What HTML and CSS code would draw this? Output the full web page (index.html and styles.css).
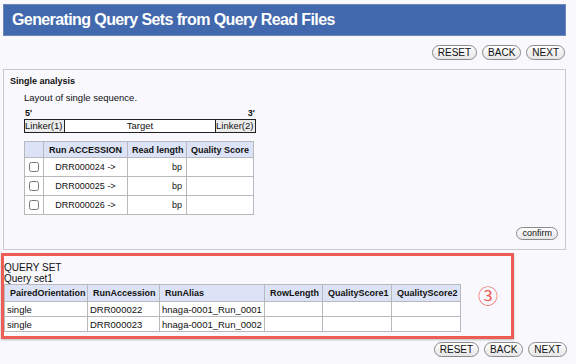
FILE: index.html
```html
<!DOCTYPE html>
<html lang="en">
<head>
    <meta charset="UTF-8">
    <title>Generating Query Sets from Query Read Files</title>
    <link rel="stylesheet" href="styles.css">
</head>
<body>
    <header class="title-bar">
        <h1>Generating Query Sets from Query Read Files</h1>
    </header>

    <div class="nav-buttons">
        <button class="pill">RESET</button>
        <button class="pill">BACK</button>
        <button class="pill">NEXT</button>
    </div>

    <section class="panel">
        <h2>Single analysis</h2>
        <div class="panel-body">
            <p class="layout-label">Layout of single sequence.</p>
            <div class="ends">
                <span>5'</span>
                <span>3'</span>
            </div>
            <div class="linker-bar">
                <div class="linker">Linker(1)</div>
                <div class="target">Target</div>
                <div class="linker">Linker(2)</div>
            </div>

            <table class="grid run-table">
                <colgroup>
                    <col class="w-check">
                    <col class="w-acc">
                    <col class="w-len">
                    <col class="w-qs">
                </colgroup>
                <thead>
                    <tr>
                        <th></th>
                        <th>Run ACCESSION</th>
                        <th>Read length</th>
                        <th>Quality Score</th>
                    </tr>
                </thead>
                <tbody>
                    <tr>
                        <td class="check"><input type="checkbox"></td>
                        <td class="acc">DRR000024 -&gt;</td>
                        <td class="bp">bp</td>
                        <td></td>
                    </tr>
                    <tr>
                        <td class="check"><input type="checkbox"></td>
                        <td class="acc">DRR000025 -&gt;</td>
                        <td class="bp">bp</td>
                        <td></td>
                    </tr>
                    <tr>
                        <td class="check"><input type="checkbox"></td>
                        <td class="acc">DRR000026 -&gt;</td>
                        <td class="bp">bp</td>
                        <td></td>
                    </tr>
                </tbody>
            </table>
        </div>
        <div class="confirm-row">
            <button class="pill">confirm</button>
        </div>
    </section>

    <section class="query-box">
        <div class="query-set">
            <p>QUERY SET</p>
            <p>Query set1</p>
            <table class="grid query-table">
                <colgroup>
                    <col class="w-orient">
                    <col class="w-acc">
                    <col class="w-alias">
                    <col class="w-row">
                    <col class="w-q">
                    <col class="w-q">
                </colgroup>
                <thead>
                    <tr>
                        <th>PairedOrientation</th>
                        <th>RunAccession</th>
                        <th>RunAlias</th>
                        <th>RowLength</th>
                        <th>QualityScore1</th>
                        <th>QualityScore2</th>
                    </tr>
                </thead>
                <tbody>
                    <tr>
                        <td>single</td>
                        <td>DRR000022</td>
                        <td>hnaga-0001_Run_0001</td>
                        <td></td>
                        <td></td>
                        <td></td>
                    </tr>
                    <tr>
                        <td>single</td>
                        <td>DRR000023</td>
                        <td>hnaga-0001_Run_0002</td>
                        <td></td>
                        <td></td>
                        <td></td>
                    </tr>
                </tbody>
            </table>
        </div>
        <span class="step-mark">③</span>
    </section>

    <div class="nav-buttons bottom">
        <button class="pill">RESET</button>
        <button class="pill">BACK</button>
        <button class="pill">NEXT</button>
    </div>
</body>
</html>
```

FILE: styles.css
```css
/* general */
body {
    margin: 0;
    padding: 4px 10px 0 3px;
    background-color: #f8f8fd;
    font-family: 'Liberation Sans', Arial, sans-serif;
    font-size: 9px;
    color: #111;
}

p {
    margin: 0;
}

.title-bar {
    height: 30px;
    background-color: #4268ad;
    border: 1px solid #6f86b8;
    display: flex;
    align-items: center;
}

.title-bar h1 {
    margin: 0 0 0 8px;
    font-size: 16px;
    letter-spacing: -0.6px;
    font-weight: bold;
    color: #fff;
}

.nav-buttons {
    display: flex;
    justify-content: flex-end;
    gap: 5px;
    margin-top: 9px;
    padding-right: 1px;
}

.nav-buttons.bottom {
    margin-top: 3px;
    margin-right: -2px;
}

.pill {
    font-family: 'Liberation Sans', Arial, sans-serif;
    font-size: 10px;
    height: 15px;
    padding: 0 5px;
    border: 1px solid #8a8a8a;
    border-radius: 8px;
    background: linear-gradient(#ffffff, #e6e6e6);
    color: #111;
    line-height: 13px;
}

/* single analysis panel */
.panel {
    margin-top: 9px;
    height: 179px;
    border: 1px solid #c9c9ce;
    position: relative;
}

.panel h2 {
    margin: 6px 0 0 6px;
    font-size: 9px;
    font-weight: bold;
}

.panel-body {
    margin-left: 20px;
    width: 232px;
}

.layout-label {
    margin-top: 6px;
    font-size: 9.5px;
}

.ends {
    display: flex;
    justify-content: space-between;
    margin-top: 5px;
    font-weight: bold;
    padding: 0 0 0 1px;
    width: 230px;
}

.linker-bar {
    display: flex;
    width: 230px;
    border: 1px solid #222;
    height: 12px;
    line-height: 12px;
    font-size: 9.5px;
    margin-top: 1px;
}

.linker {
    width: 39px;
    background-color: #ececec;
}

.linker:first-child {
    border-right: 1px solid #222;
}

.linker:last-child {
    border-left: 1px solid #222;
}

.target {
    flex: 1;
    text-align: center;
    background-color: #fff;
}

.grid {
    border-collapse: collapse;
    table-layout: fixed;
    background-color: #fff;
    white-space: nowrap;
}

.grid th,
.grid td {
    border: 1px solid #b9b9bd;
    padding: 0 4px;
    overflow: hidden;
}

.grid th {
    background-color: #dde3f6;
    font-weight: bold;
}

.run-table {
    margin-top: 8px;
    width: 229px;
}

.run-table .w-check { width: 19px; }
.run-table .w-acc { width: 84px; }
.run-table .w-len { width: 59px; }
.run-table .w-qs { width: 67px; }

.run-table th {
    height: 15px;
}

.run-table td {
    height: 18px;
}

.run-table .check {
    text-align: center;
    padding: 0;
}

.run-table .acc {
    text-align: center;
}

.run-table .bp {
    text-align: right;
}

.run-table input {
    margin: 0;
    width: 10px;
    height: 10px;
    vertical-align: middle;
}

.confirm-row {
    position: absolute;
    right: 7px;
    bottom: 9px;
}

.confirm-row .pill {
    height: 13px;
    font-size: 9px;
    line-height: 11px;
}

/* query set box */
.query-box {
    margin: 3px 52px 0 -2px;
    border: 3px solid #ee5d54;
    height: 80px;
    display: flex;
    align-items: flex-start;
    box-shadow: 0 1px 2px rgba(0, 0, 0, 0.25);
}

.query-set {
    padding: 6px 0 0 0;
    font-size: 10px;
    line-height: 11px;
}

.query-table {
    margin-top: 0;
    width: 457px;
    font-size: 9.5px;
}

.query-table .w-orient { width: 83px; }
.query-table .w-acc { width: 72px; }
.query-table .w-alias { width: 105px; }
.query-table .w-row { width: 58px; }
.query-table .w-q { width: 69px; }

.query-table th {
    height: 16px;
    font-size: 9px;
    text-align: left;
    padding: 0 0 0 5px;
}

.query-table td {
    height: 14px;
    padding: 0 2px;
}

.step-mark {
    margin: 28px 0 0 17px;
    font-family: 'Noto Sans CJK JP', 'DejaVu Sans', sans-serif;
    font-size: 20px;
    line-height: 24px;
    color: #ee5d54;
}
```
